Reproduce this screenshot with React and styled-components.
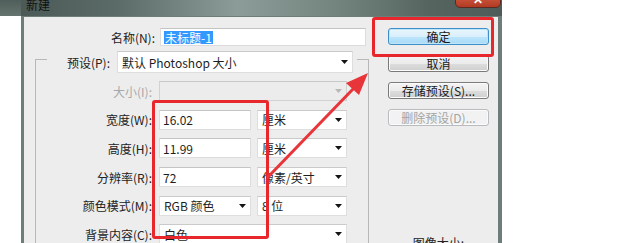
import React from 'react';
import styled, { createGlobalStyle } from 'styled-components';

const GlobalStyle = createGlobalStyle`
  html, body {
    margin: 0;
    padding: 0;
    background: #fff;
  }
  body {
    font-family: "Noto Sans CJK SC", "Noto Sans", sans-serif;
    font-size: 12px;
    color: #1e1e1e;
  }
`;

function Arrow({ disabled }) {
    return (
        <ArrowIcon width="7" height="4" viewBox="0 0 7 4">
            <path d="M0 0h7L3.5 4z" fill={disabled ? '#b8b8b8' : '#141414'} />
        </ArrowIcon>
    );
}

function Select({ children, disabled, tall }) {
    return (
        <SelectBox $disabled={disabled} $tall={tall}>
            <span>{children}</span>
            <Arrow disabled={disabled} />
        </SelectBox>
    );
}

function App() {
    return (
        <Stage>
            <GlobalStyle />
            <Window>
                <TitleBar>
                    <Title>新建</Title>
                    <CloseButton>✕</CloseButton>
                </TitleBar>
                <Frame>
                    <Body>
                        <LeftCol>
                            <NameRow>
                                <Label>名称(N):</Label>
                                <Input>
                                    <Selected>未标题-1</Selected>
                                </Input>
                            </NameRow>
                            <Group>
                                <Legend>
                                    <LegendRow>
                                        <Label>预设(P):</Label>
                                        <Select tall>默认 Photoshop 大小</Select>
                                    </LegendRow>
                                </Legend>
                                <Rows>
                                    <Row>
                                        <Label $disabled>大小(I):</Label>
                                        <Select disabled />
                                    </Row>
                                    <Row>
                                        <Label>宽度(W):</Label>
                                        <Pair>
                                            <Input>16.02</Input>
                                            <Select>厘米</Select>
                                        </Pair>
                                    </Row>
                                    <Row>
                                        <Label>高度(H):</Label>
                                        <Pair>
                                            <Input>11.99</Input>
                                            <Select>厘米</Select>
                                        </Pair>
                                    </Row>
                                    <Row>
                                        <Label>分辨率(R):</Label>
                                        <Pair>
                                            <Input>72</Input>
                                            <Select>像素/英寸</Select>
                                        </Pair>
                                    </Row>
                                    <Row>
                                        <Label>颜色模式(M):</Label>
                                        <Pair>
                                            <Select>RGB 颜色</Select>
                                            <Select>8 位</Select>
                                        </Pair>
                                    </Row>
                                    <Row>
                                        <Label>背景内容(C):</Label>
                                        <Select>白色</Select>
                                    </Row>
                                </Rows>
                            </Group>
                        </LeftCol>
                        <RightCol>
                            <Button $primary>确定</Button>
                            <Button>取消</Button>
                            <Button>存储预设(S)...</Button>
                            <Button $disabled>删除预设(D)...</Button>
                            <SizeCaption>图像大小:</SizeCaption>
                        </RightCol>
                    </Body>
                </Frame>
            </Window>

            {/* red annotations drawn over the dialog */}
            <Highlight $x={152} $y={100} $w={117} $h={139} />
            <Highlight $x={372} $y={17} $w={122} $h={40} />
            <Pointer width="620" height="243" viewBox="0 0 620 243">
                <line x1="268" y1="177" x2="354" y2="88" stroke="#e8353a" strokeWidth="3" strokeLinecap="round" />
                <path d="M368 73 L359 95 L346 83 Z" fill="#e8353a" />
            </Pointer>
        </Stage>
    );
}

const Stage = styled.div`
    position: relative;
    width: 620px;
    height: 243px;
    overflow: hidden;
    background: linear-gradient(#505e5b, #66746f) 0 0 / 22px 16px no-repeat, #fff;
`;

const Window = styled.div`
    margin: -8px 0 0 21px;
    width: 481px;
    height: 270px;
    display: flex;
    flex-direction: column;
`;

const TitleBar = styled.div`
    height: 24px;
    flex: none;
    display: flex;
    align-items: center;
    padding-left: 5px;
    background: linear-gradient(90deg, #4b5a57 0%, #5b6b68 20%, #8c9d99 45%, #74857f 65%, #55645f 85%, #4e5c59 100%);
`;

const Title = styled.div`
    color: #111;
    font-size: 12px;
    margin-top: 1px;
`;

const CloseButton = styled.div`
    margin-left: auto;
    margin-right: 1px;
    align-self: flex-start;
    margin-top: -4px;
    width: 46px;
    height: 20px;
    display: flex;
    align-items: center;
    justify-content: center;
    box-sizing: border-box;
    border: 1px solid #5b2a22;
    border-radius: 0 0 5px 5px;
    background: linear-gradient(#d98a76, #c7513a 55%, #b23a22);
    color: #fff;
    font-size: 12px;
    font-weight: bold;
`;

const Frame = styled.div`
    flex: 1;
    display: flex;
    padding: 1px 4px 0 3px;
    background: #6d7d7a;
`;

const Body = styled.div`
    flex: 1;
    display: flex;
    background: #ededed;
`;

const LeftCol = styled.div`
    width: 348px;
    flex: none;
`;

const NameRow = styled.div`
    margin-top: 11px;
    display: grid;
    grid-template-columns: 131px 206px;
    column-gap: 5px;
    align-items: center;
`;

const Label = styled.div`
    text-align: right;
    white-space: nowrap;
    color: ${(p) => (p.$disabled ? '#a8a8a8' : '#222')};
`;

const Input = styled.div`
    height: 18px;
    box-sizing: border-box;
    display: flex;
    align-items: center;
    padding-left: 3px;
    background: #fff;
    border: 1px solid #dcdcdc;
    border-top-color: #c4c4c4;
    white-space: nowrap;
`;

const Selected = styled.span`
    background: #3399ff;
    color: #fff;
    line-height: 13px;
    padding: 0 1px;
`;

const Group = styled.fieldset`
    margin: -1px 0 0 11px;
    padding: 0 0 0 0;
    width: 334px;
    box-sizing: border-box;
    min-width: 0;
    border: 1px solid #b8b8b8;
    height: 240px;
`;

const Legend = styled.legend`
    margin-left: 11px;
    padding: 6px 4px 0 0;
`;

const LegendRow = styled.div`
    display: grid;
    grid-template-columns: 63px 236px;
    column-gap: 7px;
    align-items: center;
`;

const Rows = styled.div`
    padding-top: 8px;
    display: flex;
    flex-direction: column;
    gap: 8.7px;
`;

const Row = styled.div`
    display: grid;
    grid-template-columns: 116px 188px;
    column-gap: 7px;
    align-items: center;
    height: 20px;
`;

const Pair = styled.div`
    display: grid;
    grid-template-columns: 92px 90px;
    column-gap: 6px;
    height: 100%;
    & > * {
        height: 20px;
    }
`;

const SelectBox = styled.div`
    height: ${(p) => (p.$tall ? '22px' : '20px')};
    box-sizing: border-box;
    display: flex;
    align-items: center;
    justify-content: space-between;
    padding: 0 4px 0 4px;
    background: ${(p) => (p.$disabled ? '#ececec' : '#fff')};
    border: 1px solid ${(p) => (p.$disabled ? '#d2d2d2' : '#dedede')};
    border-top-color: ${(p) => (p.$disabled ? '#c8c8c8' : '#cacaca')};
    white-space: nowrap;
`;

const ArrowIcon = styled.svg`
    flex: none;
    display: block;
`;

const RightCol = styled.div`
    flex: 1;
    display: flex;
    flex-direction: column;
    gap: 10px;
    padding: 11px 0 0 16px;
`;

const Button = styled.div`
    width: 101px;
    height: 17px;
    box-sizing: border-box;
    display: flex;
    align-items: center;
    justify-content: center;
    border-radius: 3px;
    border: 1px solid ${(p) => (p.$primary ? '#3c8fc8' : p.$disabled ? '#b8bcbf' : '#7a7a7a')};
    background: ${(p) =>
        p.$primary
            ? 'linear-gradient(#eaf6fd, #d9effc 50%, #bee6fd 51%, #a7d9f5)'
            : p.$disabled
            ? '#f2f2f2'
            : 'linear-gradient(#f4f4f4, #ebebeb 50%, #dddddd 51%, #cfcfcf)'};
    box-shadow: ${(p) => (p.$primary ? 'inset 0 0 0 1px #bfe4f7' : 'inset 0 0 0 1px #fbfbfb')};
    color: ${(p) => (p.$disabled ? '#a4a4a4' : '#1a1a1a')};
    white-space: nowrap;
`;

const SizeCaption = styled.div`
    width: 101px;
    margin-top: 98px;
    text-align: center;
    color: #222;
`;

const Highlight = styled.div`
    position: absolute;
    left: ${(p) => p.$x}px;
    top: ${(p) => p.$y}px;
    width: ${(p) => p.$w}px;
    height: ${(p) => p.$h}px;
    box-sizing: border-box;
    border: 3px solid #e8272c;
    border-radius: 3px;
    pointer-events: none;
`;

const Pointer = styled.svg`
    position: absolute;
    left: 0;
    top: 0;
    pointer-events: none;
`;

export default App;
